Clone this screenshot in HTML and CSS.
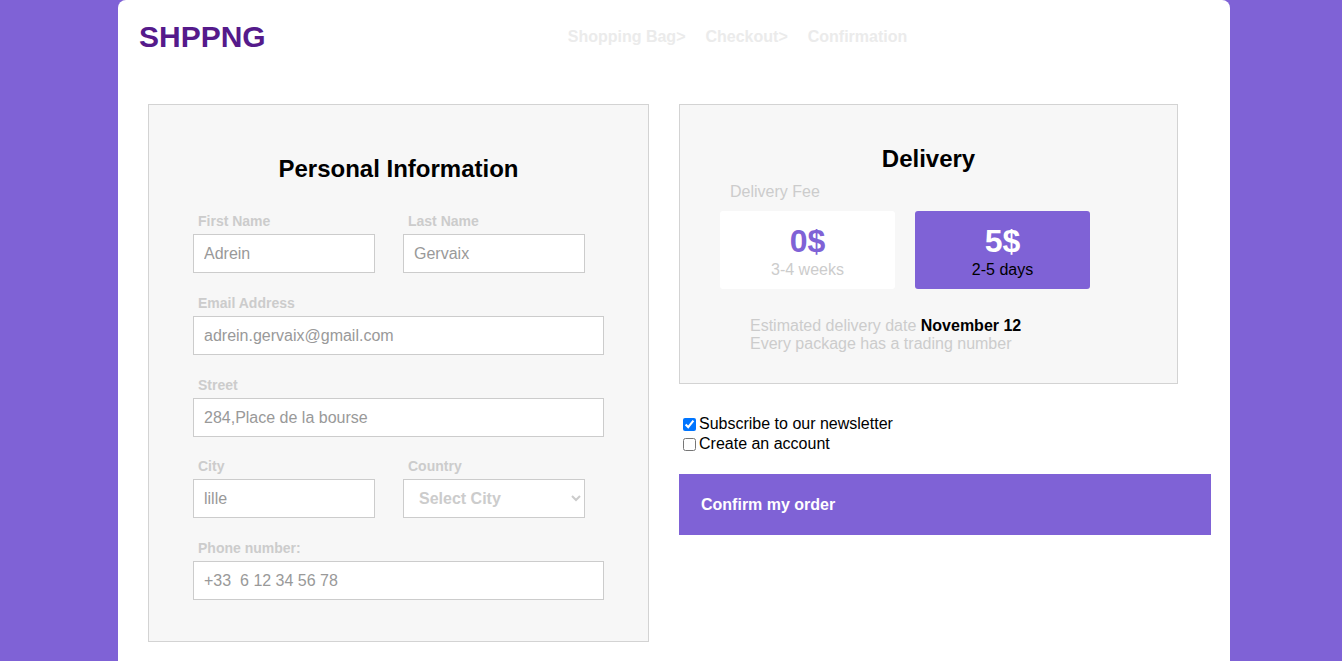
FILE: index.html
```html
<!DOCTYPE html>
<html lang="en">
<head>
<meta charset="utf-8">
<title>SHPPNG - Checkout</title>
<link rel="stylesheet" href="styles.css">
</head>
<body>
<div class="page">
  <header class="header">
    <a class="logo" href="#">SHPPNG</a>
    <nav class="steps">
      <a href="#">Shopping Bag&gt;</a>
      <a href="#">Checkout&gt;</a>
      <a href="#">Confirmation</a>
    </nav>
  </header>
  <main class="main">
    <section class="card personal">
      <h2 class="card-title">Personal Information</h2>
      <div class="fields">
        <div class="row">
          <div class="field half">
            <label class="label">First Name</label>
            <input class="input" type="text" value="Adrein">
          </div>
          <div class="field half">
            <label class="label">Last Name</label>
            <input class="input" type="text" value="Gervaix">
          </div>
        </div>
        <div class="field">
          <label class="label">Email Address</label>
          <input class="input" type="text" value="adrein.gervaix@gmail.com">
        </div>
        <div class="field">
          <label class="label">Street</label>
          <input class="input" type="text" value="284,Place de la bourse">
        </div>
        <div class="row tight">
          <div class="field half">
            <label class="label">City</label>
            <input class="input" type="text" value="lille">
          </div>
          <div class="field half">
            <label class="label">Country</label>
            <select class="input select">
              <option>Select City</option>
            </select>
          </div>
        </div>
        <div class="field last">
          <label class="label">Phone number:</label>
          <input class="input" type="text" value="+33  6 12 34 56 78">
        </div>
      </div>
    </section>
    <section class="side">
      <div class="card delivery">
        <h2 class="card-title">Delivery</h2>
        <div class="delivery-body">
          <p class="fee-label">Delivery Fee</p>
          <div class="options">
            <div class="option">
              <span class="price">0$</span>
              <span class="time">3-4 weeks</span>
            </div>
            <div class="option selected">
              <span class="price">5$</span>
              <span class="time">2-5 days</span>
            </div>
          </div>
          <div class="estimate">
            <p>Estimated delivery date <strong>November 12</strong></p>
            <p>Every package has a trading number</p>
          </div>
        </div>
      </div>
      <div class="checks">
        <label class="check"><input type="checkbox" checked>Subscribe to our newsletter</label>
        <label class="check"><input type="checkbox">Create an account</label>
      </div>
      <button class="confirm" type="button">Confirm my order</button>
    </section>
  </main>
</div>
</body>
</html>
```

FILE: styles.css
```css
* { box-sizing: border-box; }

html, body {
  margin: 0;
  padding: 0;
}

body {
  background: #7f62d6;
  font-family: "Liberation Sans", Arial, sans-serif;
  overflow: hidden;
}

.page {
  margin-left: 118px;
  width: 1112px;
  min-height: 700px;
  background: #ffffff;
  border-radius: 8px 8px 0 0;
}

.header {
  display: flex;
  align-items: center;
  height: 74px;
  padding-left: 21px;
}

.logo {
  font-size: 30px;
  font-weight: bold;
  color: #551a8b;
  text-decoration: none;
}

.steps {
  display: flex;
  gap: 20px;
  margin-left: 302px;
}

.steps a {
  font-size: 16px;
  font-weight: bold;
  color: #ebebeb;
  text-decoration: none;
}

.main {
  display: flex;
  align-items: flex-start;
  gap: 30px;
  padding: 30px 0 0 30px;
}

.card {
  background: #f7f7f7;
  border: 1px solid #d3d3d3;
}

.card-title {
  margin: 0;
  font-size: 24px;
  line-height: 28px;
  font-weight: bold;
  text-align: center;
  color: #000;
}

.personal {
  width: 501px;
  padding: 50px 0 41px 0;
}

.fields {
  margin-top: 30px;
  padding-left: 44px;
  display: flex;
  flex-direction: column;
  gap: 22px;
}

.row {
  display: flex;
  gap: 28px;
}

.row.tight {
  margin-top: -1px;
}

.field {
  display: flex;
  flex-direction: column;
  width: 411px;
}

.field.half {
  width: 182px;
}

.label {
  font-size: 14px;
  line-height: 16px;
  font-weight: bold;
  color: #cccccc;
  padding-left: 5px;
  margin-bottom: 5px;
}

.input {
  width: 100%;
  height: 39px;
  border: 1px solid #cccccc;
  background: #ffffff;
  padding: 0 10px;
  font-family: "Liberation Sans", Arial, sans-serif;
  font-size: 16px;
  color: #999999;
  border-radius: 0;
  outline: none;
}

.select {
  font-weight: bold;
  color: #cccccc;
  padding: 0 8px 0 11px;
}

.side {
  width: 532px;
  display: flex;
  flex-direction: column;
}

.delivery {
  width: 499px;
  padding: 40px 0 30px 0;
}

.delivery-body {
  padding-left: 40px;
}

.fee-label {
  margin: 10px 0 0 10px;
  font-size: 16px;
  line-height: 18px;
  color: #cccccc;
}

.options {
  display: flex;
  gap: 20px;
  margin-top: 10px;
}

.option {
  width: 175px;
  height: 78px;
  background: #ffffff;
  border-radius: 3px;
  display: flex;
  flex-direction: column;
  align-items: center;
  padding-top: 12px;
}

.option .price {
  font-size: 32px;
  line-height: 36px;
  font-weight: bold;
  color: #7f62d6;
}

.option .time {
  margin-top: 2px;
  font-size: 16px;
  line-height: 18px;
  color: #cccccc;
}

.option.selected {
  background: #7f62d6;
}

.option.selected .price {
  color: #ffffff;
}

.option.selected .time {
  color: #000000;
}

.estimate {
  margin: 28px 0 0 30px;
}

.estimate p {
  margin: 0;
  font-size: 16px;
  line-height: 18px;
  color: #cccccc;
}

.estimate strong {
  color: #000000;
}

.checks {
  margin-top: 30px;
  display: flex;
  flex-direction: column;
}

.check {
  display: flex;
  align-items: center;
  height: 20px;
  font-size: 16px;
  color: #000000;
}

.check input {
  margin: 0 3px 0 4px;
  width: 13px;
  height: 13px;
}

.confirm {
  margin-top: 20px;
  width: 532px;
  height: 61px;
  border: none;
  background: #7f62d6;
  color: #ffffff;
  font-family: "Liberation Sans", Arial, sans-serif;
  font-size: 16px;
  font-weight: bold;
  text-align: left;
  padding: 0 0 0 22px;
  cursor: pointer;
}
```
